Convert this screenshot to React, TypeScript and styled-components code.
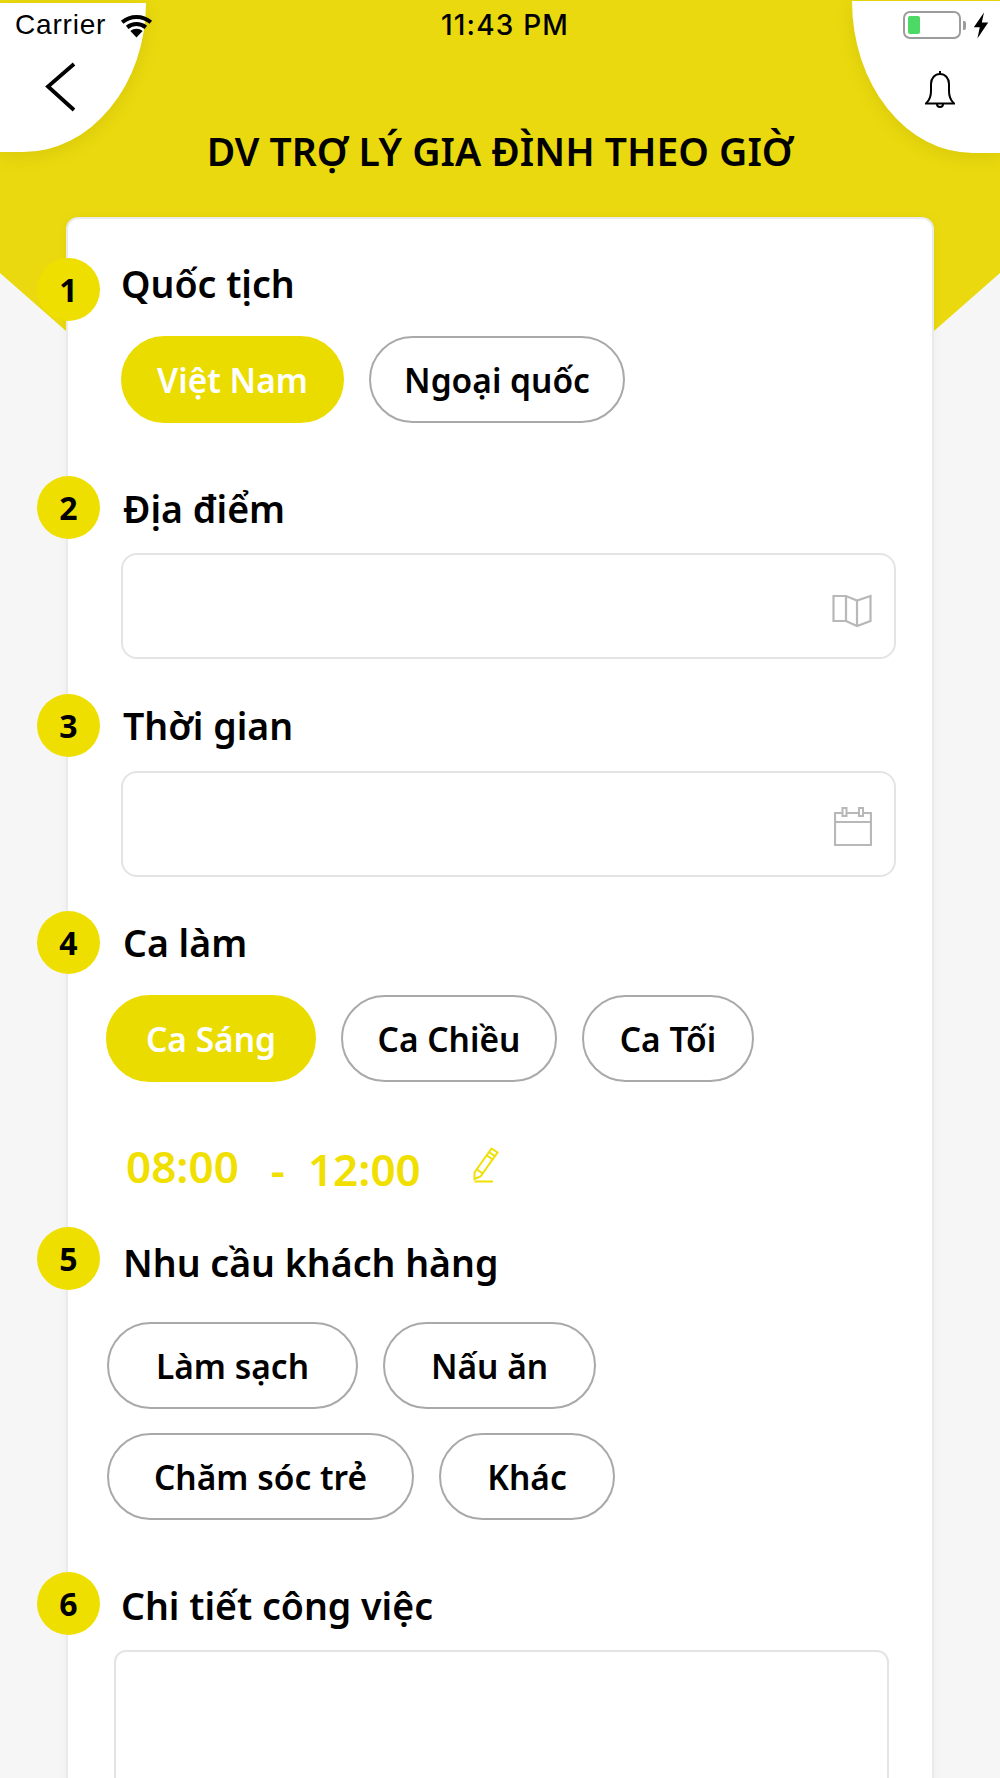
import React from 'react';
import styled, { createGlobalStyle } from 'styled-components';

const GlobalStyle = createGlobalStyle`
    html, body {
        margin: 0;
        padding: 0;
        background: #f6f6f6;
    }
    * {
        box-sizing: border-box;
    }
`;

const WifiIcon = () => (
    <svg width="35" height="25" viewBox="0 0 35 25">
        <path d="M17.5 24.5L11.4 17.9C15 15 20 15 23.6 17.9Z" fill="#000" />
        <path d="M8.2 14.4C13.6 10 21.4 10 26.8 14.4" fill="none" stroke="#000" strokeWidth="4" />
        <path d="M3.2 9.2C11.5 2.3 23.5 2.3 31.8 9.2" fill="none" stroke="#000" strokeWidth="4" />
    </svg>
);

const BoltIcon = () => (
    <svg width="16" height="27" viewBox="0 0 16 27">
        <path d="M11 0.5L0.8 15.2H6.8L4.4 26.5L15.2 10.6H8.8Z" fill="#000" />
    </svg>
);

const BackIcon = () => (
    <svg width="32" height="50" viewBox="0 0 32 50">
        <path d="M29 2L3 24.5L29 48" fill="none" stroke="#000" strokeWidth="3.8" />
    </svg>
);

const BellIcon = () => (
    <svg width="32" height="38" viewBox="0 0 32 38">
        <path d="M16 1V4" stroke="#000" strokeWidth="2" />
        <path
            d="M2.5 33C6 29.5 7 26 7 21V14C7 8 11 4 16 4C21 4 25 8 25 14V21C25 26 26 29.5 29.5 33"
            fill="none"
            stroke="#000"
            strokeWidth="2"
        />
        <path d="M1 33.5H31" stroke="#000" strokeWidth="2" />
        <path d="M13 34C13 38 19 38 19 34" fill="none" stroke="#000" strokeWidth="2" />
    </svg>
);

const MapIcon = () => (
    <svg width="40" height="34" viewBox="0 0 40 34">
        <path
            d="M1.5 2H14L25 6.5L38.5 2V27L25 32L14 27H1.5Z"
            fill="none"
            stroke="#b8b8b8"
            strokeWidth="2.2"
        />
        <path d="M14 2V27M25 6.5V32" stroke="#b8b8b8" strokeWidth="2.2" />
    </svg>
);

const CalendarIcon = () => (
    <svg width="38" height="40" viewBox="0 0 38 40">
        <path d="M1 6H37V38H1Z" fill="none" stroke="#b8b8b8" strokeWidth="2.2" />
        <path d="M1 15H37" stroke="#b8b8b8" strokeWidth="2.2" />
        <path d="M8.5 1H12.5V9H8.5ZM25 1H29V9H25Z" fill="#fff" stroke="#b8b8b8" strokeWidth="2" />
    </svg>
);

const PencilIcon = () => (
    <svg width="26" height="36" viewBox="0 0 26 36" fill="none" stroke="#f0df00" strokeWidth="2">
        <path d="M18.5 1.5L24.5 5.5L7.5 29.5L1.5 32V25.5Z" />
        <path d="M16 5L22 9.2M4 22.5L10 26.7M1.5 34.5H20" />
        <path d="M14 8.5L20 12.7" />
    </svg>
);

const App = () => {
    return (
        <Page>
            <GlobalStyle />
            <Hero>
                <CornerLeft />
                <CornerRight />
                <StatusBar>
                    <StatusLeft>
                        <Carrier>Carrier</Carrier>
                        <WifiIcon />
                    </StatusLeft>
                    <Clock>11:43 PM</Clock>
                    <StatusRight>
                        <Battery>
                            <BatteryFill />
                        </Battery>
                        <BatteryNub />
                        <BoltIcon />
                    </StatusRight>
                </StatusBar>
                <NavRow>
                    <BackIcon />
                    <BellIcon />
                </NavRow>
                <Title>DV TRỢ LÝ GIA ĐÌNH THEO GIỜ</Title>
            </Hero>
            <Card>
                <Heading $top={39}>
                    <Badge>1</Badge>
                    <Label $left={21} $shift={-12}>Quốc tịch</Label>
                </Heading>
                <PillRow $indent={53} $top={15}>
                    <Pill $width={223} $active>Việt Nam</Pill>
                    <Pill $width={256}>Ngoại quốc</Pill>
                </PillRow>

                <Heading $top={53}>
                    <Badge>2</Badge>
                    <Label $left={23} $shift={2}>Địa điểm</Label>
                </Heading>
                <InputBox $iconDrop={10}>
                    <MapIcon />
                </InputBox>

                <Heading $top={35}>
                    <Badge>3</Badge>
                    <Label $left={23} $shift={0}>Thời gian</Label>
                </Heading>
                <InputBox $iconDrop={6}>
                    <CalendarIcon />
                </InputBox>

                <Heading $top={34}>
                    <Badge>4</Badge>
                    <Label $left={23} $shift={0}>Ca làm</Label>
                </Heading>
                <PillRow $indent={38} $top={21}>
                    <Pill $width={210} $active>Ca Sáng</Pill>
                    <Pill $width={216}>Ca Chiều</Pill>
                    <Pill $width={172}>Ca Tối</Pill>
                </PillRow>
                <TimeRow>
                    <TimeText>08:00</TimeText>
                    <TimeDash>-</TimeDash>
                    <TimeText $drop>12:00</TimeText>
                    <PencilWrap>
                        <PencilIcon />
                    </PencilWrap>
                </TimeRow>

                <Heading $top={36}>
                    <Badge>5</Badge>
                    <Label $left={23} $shift={8}>Nhu cầu khách hàng</Label>
                </Heading>
                <PillRow $indent={39} $top={32}>
                    <Pill $width={251}>Làm sạch</Pill>
                    <Pill $width={213}>Nấu ăn</Pill>
                </PillRow>
                <PillRow $indent={39} $top={24}>
                    <Pill $width={307}>Chăm sóc trẻ</Pill>
                    <Pill $width={176}>Khác</Pill>
                </PillRow>

                <Heading $top={52}>
                    <Badge>6</Badge>
                    <Label $left={21} $shift={3}>Chi tiết công việc</Label>
                </Heading>
                <DetailBox />
            </Card>
        </Page>
    );
};

const Page = styled.div`
    width: 1000px;
    height: 1778px;
    overflow: hidden;
    background: #f6f6f6;
    font-family: 'Noto Sans', 'Open Sans', sans-serif;
    color: #000;
`;
const Hero = styled.header`
    position: relative;
    height: 331px;
    background: #e9d90e;
    clip-path: polygon(0 0, 100% 0, 100% 273px, 934px 331px, 66px 331px, 0 273px);
`;
const CornerLeft = styled.div`
    position: absolute;
    top: 3px;
    left: 0;
    width: 146px;
    height: 149px;
    background: #fff;
    border-bottom-right-radius: 123px 149px;
    box-shadow: 0 4px 16px rgba(150, 130, 0, 0.18);
`;
const CornerRight = styled.div`
    position: absolute;
    top: 1px;
    right: 0;
    width: 148px;
    height: 152px;
    background: #fff;
    border-bottom-left-radius: 121px 152px;
    box-shadow: 0 4px 16px rgba(150, 130, 0, 0.18);
`;
const StatusBar = styled.div`
    position: relative;
    height: 50px;
    display: grid;
    grid-template-columns: 1fr auto 1fr;
    align-items: center;
    padding: 0 11px 0 15px;
`;
const StatusLeft = styled.div`
    display: flex;
    align-items: center;
    gap: 13px;
`;
const Carrier = styled.span`
    font-family: 'Liberation Sans', sans-serif;
    font-size: 28px;
    line-height: 50px;
    letter-spacing: 0.8px;
`;
const Clock = styled.span`
    font-family: 'Inter', sans-serif;
    font-size: 28px;
    font-weight: 500;
    letter-spacing: 1.2px;
    padding-left: 6px;
`;
const StatusRight = styled.div`
    display: flex;
    justify-content: flex-end;
    align-items: center;
`;
const Battery = styled.div`
    width: 58px;
    height: 28px;
    padding: 3px;
    border: 2px solid #9c9c9c;
    border-radius: 7px;
`;
const BatteryFill = styled.div`
    width: 12px;
    height: 100%;
    background: #4cd964;
    border-radius: 2px;
`;
const BatteryNub = styled.div`
    width: 3px;
    height: 9px;
    margin: 0 7px 0 2px;
    background: #9c9c9c;
    border-radius: 0 2px 2px 0;
`;
const NavRow = styled.div`
    position: relative;
    height: 62px;
    display: flex;
    justify-content: space-between;
    align-items: flex-start;
    padding: 12px 44px 0 45px;
    & > svg:last-child {
        margin-top: 8px;
    }
`;
const Title = styled.h1`
    position: relative;
    margin: 16px 0 0;
    text-align: center;
    font-size: 39px;
    line-height: 46px;
    font-weight: 600;
`;
const Card = styled.main`
    position: relative;
    width: 868px;
    height: 1700px;
    margin: -114px 0 0 66px;
    background: #fff;
    border: 2px solid #eaeaea;
    border-radius: 12px 12px 0 0;
    box-shadow: 0 0 12px rgba(0, 0, 0, 0.04);
`;
const Heading = styled.div<{ $top: number }>`
    display: flex;
    align-items: center;
    height: 63px;
    margin: ${(p) => p.$top}px 0 0 -31px;
`;
const Badge = styled.div`
    width: 63px;
    height: 63px;
    flex: none;
    display: flex;
    align-items: center;
    justify-content: center;
    background: #eedf00;
    border-radius: 50%;
    font-size: 32px;
    font-weight: 700;
`;
const Label = styled.div<{ $left: number; $shift: number }>`
    margin-left: ${(p) => p.$left}px;
    padding-top: ${(p) => Math.max(p.$shift, 0)}px;
    padding-bottom: ${(p) => Math.max(-p.$shift, 0)}px;
    font-size: 37.5px;
    font-weight: 600;
`;
const PillRow = styled.div<{ $indent: number; $top: number }>`
    display: flex;
    gap: 25px;
    margin: ${(p) => p.$top}px 0 0 ${(p) => p.$indent}px;
`;
const Pill = styled.div<{ $active?: boolean; $width: number }>`
    width: ${(p) => p.$width}px;
    height: 87px;
    display: flex;
    align-items: center;
    justify-content: center;
    border: 2px solid ${(p) => (p.$active ? '#ebdc00' : '#a9a9a9')};
    border-radius: 44px;
    background: ${(p) => (p.$active ? '#ebdc00' : '#fff')};
    color: ${(p) => (p.$active ? '#fff' : '#000')};
    font-size: 33.5px;
    font-weight: 600;
`;
const InputBox = styled.div<{ $iconDrop: number }>`
    height: 106px;
    margin: 14px 36px 0 53px;
    padding: ${(p) => p.$iconDrop}px 22px 0 0;
    display: flex;
    align-items: center;
    justify-content: flex-end;
    border: 2px solid #e4e4e4;
    border-radius: 16px;
`;
const TimeRow = styled.div`
    display: flex;
    align-items: center;
    height: 50px;
    margin: 59px 0 0 58px;
`;
const TimeText = styled.span<{ $drop?: boolean }>`
    padding-top: ${(p) => (p.$drop ? 5 : 0)}px;
    font-size: 44px;
    font-weight: 600;
    color: #f0df00;
`;
const TimeDash = styled.span`
    margin: 6px 23px 0 32px;
    font-size: 44px;
    font-weight: 600;
    color: #f0df00;
`;
const PencilWrap = styled.div`
    display: flex;
    margin: -2px 0 0 52px;
`;
const DetailBox = styled.div`
    height: 400px;
    margin: 15px 43px 0 46px;
    border: 2px solid #e4e4e4;
    border-radius: 12px;
`;

export default App;
